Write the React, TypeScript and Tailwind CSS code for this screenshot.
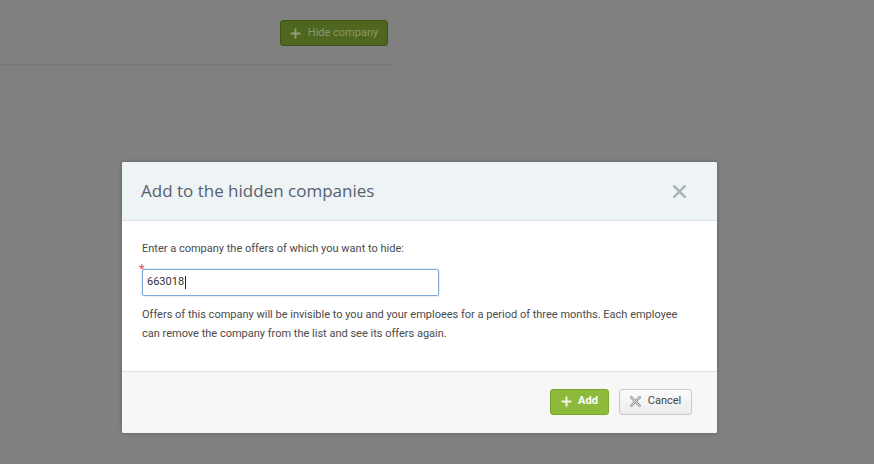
import React from "react";

function PlusIcon({ className }: { className?: string }) {
  return (
    <svg viewBox="0 0 12 12" className={className} aria-hidden>
      <path d="M6 1.5v9M1.5 6h9" stroke="currentColor" strokeWidth="2.2" strokeLinecap="round" fill="none" />
    </svg>
  );
}

function XIcon({ className }: { className?: string }) {
  return (
    <svg viewBox="0 0 14 14" className={className} aria-hidden>
      <path d="M2 2l10 10M12 2L2 12" stroke="currentColor" strokeWidth="2.2" strokeLinecap="round" fill="none" />
    </svg>
  );
}

function CancelIcon({ className }: { className?: string }) {
  return (
    <svg viewBox="0 0 12 12" className={className} aria-hidden>
      <path d="M1.5 1.5l9 9M10.5 1.5l-9 9" stroke="#9a9a9a" strokeWidth="3" strokeLinecap="round" fill="none" />
      <path d="M1.5 1.5l9 9M10.5 1.5l-9 9" stroke="#e8e8e8" strokeWidth="1" strokeLinecap="round" fill="none" />
    </svg>
  );
}

export default function App() {
  const body = { fontFamily: 'Roboto, "Liberation Sans", sans-serif' };
  const title = { fontFamily: '"Open Sans", "Liberation Sans", sans-serif' };
  return (
    <div className="relative w-[874px] h-[464px] bg-[#808080] overflow-hidden" style={body}>
      {/* background page */}
      <div className="w-[395px] h-[65px] border-b border-[#777777] flex justify-end items-start pt-[20px] pr-[7px]">
        <button className="h-[26px] w-[108px] rounded-[3px] bg-[#4e661e] border border-[#3f5316] text-[#8a9a6e] text-[11px] flex items-center justify-center gap-[7px]">
          <PlusIcon className="w-[11px] h-[11px] text-[#8f9c7a]" />
          <span>Hide company</span>
        </button>
      </div>

      {/* modal */}
      <div className="absolute left-[122px] top-[162px] w-[595px] h-[271px] bg-white rounded-[2px] shadow-[0_0_4px_rgba(0,0,0,0.25)] flex flex-col">
        <div className="h-[59px] bg-[#eef3f6] border-b border-[#dde3e7] flex items-center justify-between pl-[19px] pr-[30px] rounded-t-[2px]">
          <h2 className="text-[17px] text-[#57606e]" style={title}>Add to the hidden companies</h2>
          <XIcon className="w-[15px] h-[15px] text-[#a9b2b9]" />
        </div>
        <div className="flex-1 px-[20px] pt-[20px] text-[11px] text-[#4a4a4a]">
          <div className="leading-[16px]">Enter a company the offers of which you want to hide:</div>
          <div className="relative mt-[12px] w-[297px]">
            <span className="absolute -left-[3px] -top-[7px] text-[#d9534f] text-[13px] leading-none">*</span>
            <div className="h-[27px] border border-[#7da8d9] rounded-[2px] shadow-[0_0_2px_rgba(100,150,210,0.5)] flex items-center pl-[4px] text-[#333] text-[11px]">
              663018<span className="inline-block w-px h-[13px] bg-[#222] ml-px" />
            </div>
          </div>
          <p className="mt-[9px] leading-[19px] text-[#4a4a4a]">
            Offers of this company will be invisible to you and your emploees for a period of three months. Each employee can remove the company from the list and see its offers again.
          </p>
        </div>
        <div className="h-[62px] bg-[#f7f7f7] border-t border-[#e2e2e2] flex items-center justify-end gap-[10px] pr-[25px] pb-[2px] rounded-b-[2px]">
          <button className="h-[26px] w-[59px] rounded-[3px] bg-[#8dba3a] border border-[#7aa52e] text-white text-[11px] font-bold flex items-center justify-center gap-[6px]">
            <PlusIcon className="w-[11px] h-[11px] text-[#f0f6e4]" />
            <span>Add</span>
          </button>
          <button className="h-[26px] w-[73px] rounded-[3px] bg-gradient-to-b from-[#fbfbfb] to-[#ececec] border border-[#c9c9c9] text-[#444] text-[11px] flex items-center justify-center gap-[7px]">
            <CancelIcon className="w-[11px] h-[11px]" />
            <span>Cancel</span>
          </button>
        </div>
      </div>
    </div>
  );
}
